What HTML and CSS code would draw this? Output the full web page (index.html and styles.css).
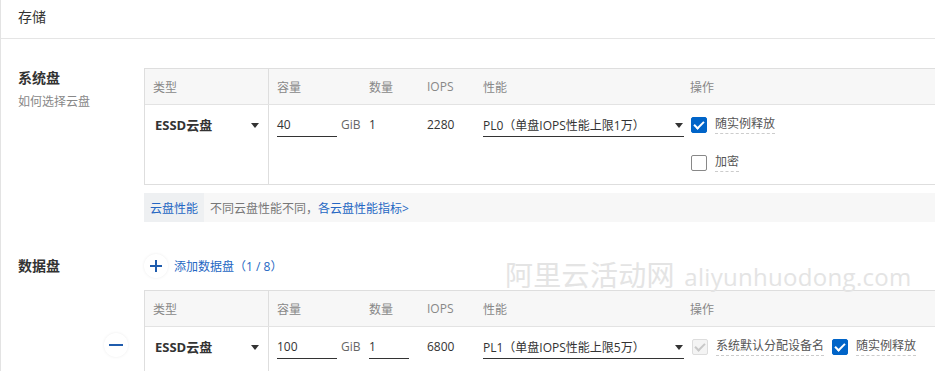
FILE: index.html
```html
<!DOCTYPE html>
<html lang="zh-CN">
  <head>
    <title>存储</title>
    <meta charset="UTF-8" />
    <meta name="viewport" content="width=device-width, initial-scale=1.0" />
    <link rel="stylesheet" href="styles.css">
  </head>
  <body>
    <div class="panel">
      <div class="panel-title">存储</div>

      <div class="section system-section">
        <div class="section-label">
          <h3>系统盘</h3>
          <p class="hint">如何选择云盘</p>
        </div>
        <div class="section-body">
          <div class="disk-table">
            <div class="row head">
              <div class="cell type-cell">类型</div>
              <div class="cell">容量</div>
              <div class="cell">数量</div>
              <div class="cell">IOPS</div>
              <div class="cell">性能</div>
              <div class="cell">操作</div>
            </div>
            <div class="row body">
              <div class="cell type-cell">
                <div class="type-select">ESSD云盘 <span class="caret"></span></div>
              </div>
              <div class="cell">
                <span class="field size-field">40</span><span class="unit">GiB</span>
              </div>
              <div class="cell">1</div>
              <div class="cell">2280</div>
              <div class="cell">
                <div class="field perf-field"><span>PL0<span class="paren">（</span>单盘IOPS性能上限1万<span class="paren">）</span></span><span class="caret"></span></div>
              </div>
              <div class="cell ops">
                <label class="check"><span class="box checked"></span><span class="check-text">随实例释放</span></label>
                <label class="check"><span class="box"></span><span class="check-text">加密</span></label>
              </div>
            </div>
          </div>

          <div class="tip-bar">
            <span class="tip-tag">云盘性能</span>
            <span class="tip-text">不同云盘性能不同，<a class="link">各云盘性能指标&gt;</a></span>
          </div>
        </div>
      </div>

      <div class="section data-section">
        <div class="section-label">
          <h3>数据盘</h3>
        </div>
        <div class="section-body">
          <div class="add-row">
            <span class="round-btn plus"></span>
            <a class="link">添加数据盘<span class="paren">（</span>1 / 8<span class="paren">）</span></a>
          </div>
          <div class="disk-table">
            <div class="row head">
              <div class="cell type-cell">类型</div>
              <div class="cell">容量</div>
              <div class="cell">数量</div>
              <div class="cell">IOPS</div>
              <div class="cell">性能</div>
              <div class="cell">操作</div>
            </div>
            <div class="row body">
              <span class="round-btn minus"></span>
              <div class="cell type-cell">
                <div class="type-select">ESSD云盘 <span class="caret"></span></div>
              </div>
              <div class="cell">
                <span class="field size-field">100</span><span class="unit">GiB</span>
              </div>
              <div class="cell">
                <span class="field count-field">1</span>
              </div>
              <div class="cell">6800</div>
              <div class="cell">
                <div class="field perf-field"><span>PL1<span class="paren">（</span>单盘IOPS性能上限5万<span class="paren">）</span></span><span class="caret"></span></div>
              </div>
              <div class="cell ops inline">
                <label class="check"><span class="box checked disabled"></span><span class="check-text">系统默认分配设备名</span></label>
                <label class="check"><span class="box checked"></span><span class="check-text">随实例释放</span></label>
              </div>
            </div>
          </div>
        </div>
      </div>

      <div class="watermark"><span class="wm-cn">阿里云活动网</span> aliyunhuodong.com</div>
    </div>
  </body>
</html>
```

FILE: styles.css
```css
* {
  margin: 0;
  padding: 0;
  box-sizing: border-box;
}

body {
  font-family: 'Segoe UI', 'Open Sans', 'Noto Sans CJK SC', sans-serif;
  font-size: 12px;
  color: #333;
  background: #fff;
  overflow: hidden;
  text-spacing-trim: space-all;
}

.panel {
  position: relative;
  border-left: 1px solid #e3e3e3;
  height: 371px;
  overflow: hidden;
}

.panel-title {
  height: 39px;
  line-height: 33px;
  padding-left: 17px;
  font-size: 14px;
  border-bottom: 1px solid #e5e5e5;
}

.section {
  display: flex;
}

.section-label {
  width: 143px;
  flex-shrink: 0;
  padding-left: 17px;
}

.section-label h3 {
  font-size: 14px;
  font-weight: 700;
  color: #333;
  line-height: 20px;
}

.hint {
  color: #888;
  margin-top: 4px;
}

.section-body {
  width: 900px;
  flex-shrink: 0;
}

.system-section {
  padding-top: 29px;
}

/* table */
.disk-table {
  border: 1px solid #dedede;
}

.row {
  display: grid;
  grid-template-columns: 124px 92px 58px 56px 207px 1fr;
  position: relative;
}

.row.head {
  height: 36px;
  background: #f7f7f7;
  color: #888;
  align-items: center;
  border-bottom: 1px solid #e3e3e3;
}

.cell {
  padding-left: 8px;
}

.type-cell {
  border-right: 1px solid #dedede;
  align-self: stretch;
  display: flex;
  align-items: center;
}

.row.body {
  min-height: 79px;
  padding-top: 10px;
  line-height: 20px;
}

.row.body .type-cell {
  align-items: flex-start;
  margin-top: -10px;
  padding-top: 10px;
  padding-left: 10px;
}

.type-select {
  font-size: 13px;
  font-weight: 700;
  width: 104px;
  display: flex;
  justify-content: space-between;
  align-items: center;
}

.caret {
  width: 0;
  height: 0;
  border-left: 4px solid transparent;
  border-right: 4px solid transparent;
  border-top: 5px solid #333;
}

.field {
  display: inline-block;
  border-bottom: 1px solid #333;
  height: 22px;
}

.size-field {
  width: 60px;
}

.count-field {
  width: 40px;
}

.unit {
  color: #666;
  margin-left: 4px;
}

.perf-field {
  width: 201px;
  display: flex;
  justify-content: space-between;
  align-items: center;
  padding-right: 1px;
}

/* full width brackets */
.paren {
  display: inline-block;
  width: 12px;
  text-align: center;
}

.ops {
  display: flex;
  flex-direction: column;
  align-items: flex-start;
  gap: 19px;
  padding-left: 9px;
}

.ops.inline {
  flex-direction: row;
  gap: 8px;
  padding-left: 10px;
}

.check {
  display: flex;
  align-items: center;
  gap: 8px;
}

.box {
  width: 16px;
  height: 16px;
  border: 1px solid #888;
  border-radius: 2px;
  background: #fff;
  position: relative;
}

.box.checked {
  background: #0064c8;
  border-color: #0064c8;
}

.box.checked::after {
  content: '';
  position: absolute;
  left: 4px;
  top: 1px;
  width: 4px;
  height: 8px;
  border-right: 2px solid #fff;
  border-bottom: 2px solid #fff;
  transform: rotate(45deg);
}

.box.disabled {
  background: #f4f4f4;
  border-color: #ddd;
}

.box.disabled::after {
  border-color: #c8c8c8;
}

.check-text {
  color: #555;
  border-bottom: 1px dashed #ccc;
  line-height: 18px;
}

/* tip */
.tip-bar {
  margin-top: 8px;
  height: 29px;
  background: #f7f7f7;
  display: flex;
  align-items: center;
}

.tip-tag {
  height: 100%;
  padding: 0 6px;
  display: flex;
  align-items: center;
  background: #eef0f2;
  color: #2567c3;
}

.tip-text {
  color: #777;
  padding-left: 6px;
}

.link {
  color: #2567c3;
  text-decoration: none;
}

/* data section */
.data-section {
  padding-top: 32px;
}

.data-section .section-label {
  padding-top: 2px;
}

.add-row {
  display: flex;
  align-items: center;
  gap: 6px;
  height: 24px;
  margin-bottom: 12px;
}

.round-btn {
  width: 24px;
  height: 24px;
  border-radius: 50%;
  background: #fff;
  box-shadow: 0 0 3px rgba(0, 0, 0, 0.08);
  position: relative;
  flex-shrink: 0;
}

.round-btn::before,
.plus::after {
  content: '';
  position: absolute;
  left: 6px;
  top: 11px;
  width: 12px;
  height: 2px;
  background: #1f5cad;
}

.plus::after {
  left: 11px;
  top: 6px;
  width: 2px;
  height: 12px;
}

.minus {
  position: absolute;
  left: -41px;
  top: 6px;
}

.minus::before {
  left: 5px;
  width: 14px;
}

.watermark {
  position: absolute;
  left: 504px;
  top: 254px;
  font-size: 24px;
  color: #e4e4e4;
  letter-spacing: 0.3px;
  pointer-events: none;
}

.wm-cn {
  font-size: 28px;
  margin-right: 3px;
}
```
